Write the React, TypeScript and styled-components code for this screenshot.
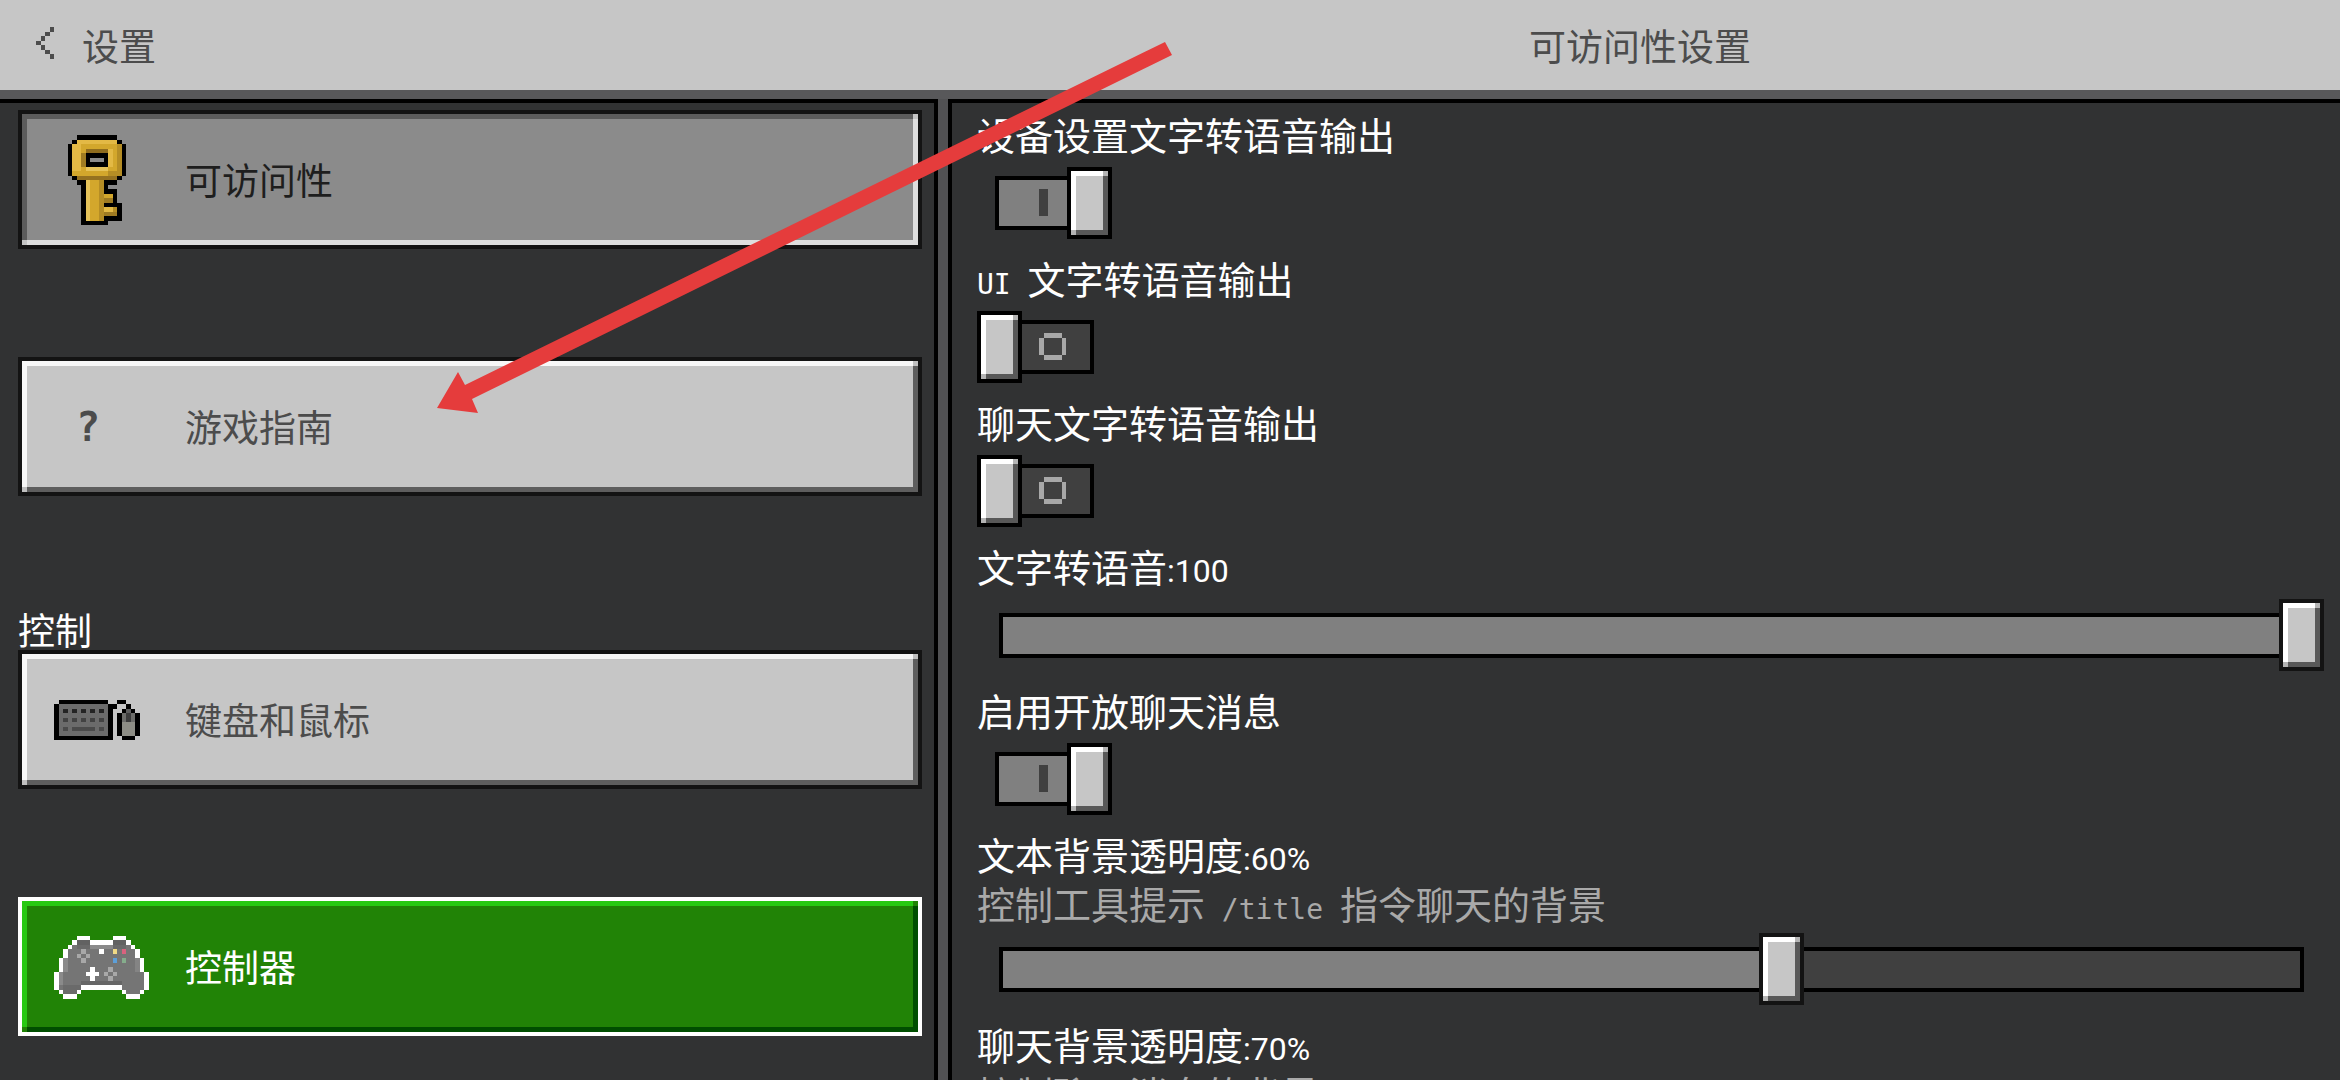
import React, { useState } from "react";
import styled, { createGlobalStyle, css } from "styled-components";

const cjk = `"Noto Sans CJK SC", "Noto Sans", sans-serif`;

const Global = createGlobalStyle`
  * { box-sizing: border-box; }
  body { margin: 0; background: #313233; }
  button, input { font: inherit; margin: 0; }
`;

/* Raised pixel edge: light top/left, dark bottom/right, blended corners. */
const bevel = (fill: string, light: string, dark: string, corner: string) => css`
  background:
    linear-gradient(${corner}, ${corner}) left bottom / 5px 5px no-repeat padding-box,
    linear-gradient(${corner}, ${corner}) right top / 5px 5px no-repeat padding-box,
    linear-gradient(${light}, ${light}) left top / 100% 5px no-repeat padding-box,
    linear-gradient(${light}, ${light}) left top / 5px 100% no-repeat padding-box,
    linear-gradient(${dark}, ${dark}) left bottom / 100% 5px no-repeat padding-box,
    linear-gradient(${dark}, ${dark}) right top / 5px 100% no-repeat padding-box,
    ${fill};
`;

const columns = css`
  display: grid;
  grid-template-columns: minmax(0, 938fr) minmax(0, 1392fr);
  column-gap: 10px;
`;

const Screen = styled.div`
  position: relative;
  display: flex;
  flex-direction: column;
  height: 100vh;
  overflow: hidden;
  background: #515153;
  color: #fff;
  font-family: ${cjk};
  font-size: 37px;
  line-height: 45px;
`;

const Header = styled.header`
  ${columns}
  align-items: center;
  flex: none;
  height: 99px;
  background: #c6c6c6;
  border-bottom: 9px solid #58585a;
  color: #4c4c4c;
`;

const BackButton = styled.button`
  display: flex;
  align-items: center;
  gap: 28px;
  justify-self: start;
  padding: 0 36px;
  border: 0;
  background: none;
  color: inherit;
  cursor: pointer;
`;

const Title = styled.h1`
  margin: 0;
  padding-right: 8px;
  text-align: center;
  font-size: inherit;
  font-weight: 400;
`;

const Panels = styled.div`
  ${columns}
  flex: 1;
  min-height: 0;
`;

const Sidebar = styled.nav`
  display: flex;
  flex-direction: column;
  gap: 108px;
  padding: 7px 12px 44px 18px;
  overflow-y: auto;
  scrollbar-width: none;
  background: #313233;
  border: solid #000;
  border-width: 4px 4px 0 0;
`;

const Section = styled.section`
  display: flex;
  flex-direction: column;
`;

const SectionTitle = styled.h2`
  margin: 0;
  padding-top: 4px;
  line-height: 42px;
  font-size: inherit;
  font-weight: 400;
`;

const SectionItems = styled.div`
  display: flex;
  flex-direction: column;
  gap: 108px;
`;

type Tone = "plain" | "pressed" | "focus";

const tones = {
  plain: css`
    ${bevel("#c6c6c6", "#f7f7f7", "#5e5e5e", "#c0c0c0")}
    border-color: #131313;
    color: #4c4c4c;
  `,
  pressed: css`
    ${bevel("#8b8b8b", "#5c5c5c", "#dedede", "#c4c4c4")}
    border-color: #131313;
    color: #1e1e1e;
  `,
  focus: css`
    ${bevel("#218306", "#27c912", "#004e00", "#218306")}
    border-color: #fff;
    color: #fff;
  `,
};

const NavButton = styled.button<{ $tone: Tone }>`
  display: flex;
  align-items: center;
  flex: none;
  gap: 32px;
  width: 100%;
  height: 139px;
  padding: 0 32px;
  border: 4px solid;
  text-align: left;
  cursor: pointer;
  ${(p) => tones[p.$tone]}
`;

const IconBox = styled.svg`
  flex: none;
  width: 99px;
  height: 90px;
`;

const GlyphIcon = styled.span`
  flex: none;
  width: 99px;
  padding: 2px 0 0 22px;
  font-family: "DejaVu Sans Mono", monospace;
  font-size: 40px;
  font-weight: 700;
`;

const Content = styled.main`
  padding: 6px 16px 0 25px;
  overflow-y: auto;
  scrollbar-width: none;
  background: #313233;
  border: solid #000;
  border-width: 4px 0 0 4px;
  font-size: 38px;
`;

const Row = styled.div`
  padding-bottom: 14px;
`;

const Label = styled.label`
  display: block;
  width: fit-content;
  line-height: 49px;
`;

const Hint = styled.p`
  margin: 0;
  padding-top: 4px;
  line-height: 41px;
  color: #a9a9a9;
`;

const Digits = styled.span`
  font-family: Roboto, sans-serif;
  font-size: 32px;
  line-height: 1;
`;

const Latin = styled.span`
  font-family: "DejaVu Sans Mono", monospace;
  font-size: 28px;
  line-height: 1;
  white-space: pre;
`;

const Switch = styled.div`
  display: grid;
  grid-template-areas: "stack";
  align-items: center;
  width: 135px;
  height: 72px;
  margin-top: 9px;
  > * { grid-area: stack; }
`;

const SwitchTrack = styled.svg<{ $on: boolean }>`
  width: 99px;
  height: 54px;
  margin-left: 18px;
  border: 4px solid #000;
  background: ${(p) => (p.$on ? "#808080" : "#404040")};
  fill: ${(p) => (p.$on ? "#404040" : "#a8a8a8")};
`;

const Knob = styled.span<{ $on: boolean }>`
  width: 45px;
  height: 72px;
  justify-self: ${(p) => (p.$on ? "end" : "start")};
  border: 4px solid #000;
  ${bevel("#c6c6c6", "#fff", "#585858", "#b4b4b4")}
`;

const SwitchInput = styled.input`
  width: 100%;
  height: 100%;
  opacity: 0;
  cursor: pointer;
`;

const Slider = styled.div`
  display: grid;
  grid-template-areas: "stack";
  align-items: center;
  height: 72px;
  margin-top: 9px;
  > * { grid-area: stack; }
`;

const Bar = styled.div`
  height: 45px;
  margin: 0 20px 0 22px;
  border: 4px solid #000;
  background: #404040;
`;

const Fill = styled.div`
  height: 100%;
  background: #808080;
`;

const Range = styled.input`
  appearance: none;
  min-width: 0;
  height: 72px;
  margin-left: 2px;
  background: none;
  outline: none;
  cursor: pointer;
  &::-webkit-slider-thumb {
    appearance: none;
    width: 45px;
    height: 72px;
    border: 4px solid #131313;
    ${bevel("#c6c6c6", "#fff", "#585858", "#b4b4b4")}
  }
`;

const Pointer = styled.svg`
  position: absolute;
  left: 0;
  top: 0;
  width: 1200px;
  height: 440px;
  pointer-events: none;
`;

/* [colour, x, y, width, height] in sprite pixels */
type Px = [string, number, number, number, number];

const Sprite = ({ top = 0, px }: { top?: number; px: Px[] }) => (
  <IconBox viewBox={`0 ${-top} 22 20`} shapeRendering="crispEdges" aria-hidden="true">
    {px.map(([c, x, y, w, h], i) => (
      <rect key={i} fill={c} x={x} y={y} width={w} height={h} />
    ))}
  </IconBox>
);

const K = "#000";
const keyPx: Px[] = [
  [K, 5, 0, 9, 11], [K, 4, 1, 11, 9], [K, 3, 2, 13, 7],
  [K, 6, 10, 6, 10], [K, 11, 12, 3, 4], [K, 11, 15, 4, 4],
  ["#8b8b8b", 12, 11, 2, 1],
  ["#d3a72c", 5, 1, 9, 9], ["#d3a72c", 4, 2, 11, 7],
  ["#e3b945", 5, 1, 9, 1], ["#e3b945", 4, 2, 2, 6],
  ["#b58d25", 14, 2, 1, 7], ["#b58d25", 12, 8, 2, 1], ["#957120", 5, 9, 9, 1],
  ["#8f6c1e", 7, 3, 5, 1], ["#9f7b22", 6, 4, 1, 3],
  ["#e6c35a", 7, 7, 5, 1], ["#e3b945", 12, 3, 1, 4],
  [K, 7, 4, 5, 3], ["#8b8b8b", 8, 5, 3, 1],
  ["#d3a72c", 7, 10, 3, 9], ["#e6c35a", 7, 10, 1, 9], ["#b58d25", 10, 10, 1, 9],
  ["#d3a72c", 11, 13, 2, 1], ["#9f7b22", 11, 14, 2, 1],
  ["#e3b945", 11, 16, 2, 1], ["#b58d25", 13, 16, 1, 2], ["#9f7b22", 11, 17, 3, 1],
];

const keyboardPx: Px[] = [
  [K, 1, 0, 11, 1], [K, 0, 1, 13, 8], ["#6b6b6b", 1, 1, 11, 7],
  ...[2, 4, 6, 8, 10].flatMap((x): Px[] => [["#242424", x, 2, 1, 1], ["#424242", x, 4, 1, 1]]),
  ["#4a4a4a", 2, 6, 1, 1], ["#4a4a4a", 4, 6, 5, 1], ["#4a4a4a", 10, 6, 1, 1],
  [K, 14, 0, 2, 1], [K, 13, 1, 1, 1], [K, 16, 1, 1, 1],
  [K, 15, 2, 3, 7], [K, 14, 3, 5, 5],
  ["#5c5c5c", 16, 2, 1, 1], ["#6d6d6a", 15, 3, 3, 2], ["#8e8e86", 15, 5, 3, 3], ["#3c3c3c", 16, 3, 1, 2],
];

const W = "#fff";
const G = "#757575";
const gamepadPx: Px[] = [
  [W, 5, 0, 3, 1], [W, 13, 0, 3, 1], [W, 4, 1, 13, 1], [W, 3, 2, 15, 1], [W, 2, 3, 17, 2],
  [W, 1, 5, 19, 3], [W, 0, 8, 21, 4], [W, 1, 12, 5, 1], [W, 15, 12, 5, 1], [W, 2, 13, 3, 1], [W, 16, 13, 3, 1],
  [G, 4, 2, 13, 1], [G, 3, 3, 15, 2], [G, 2, 5, 17, 3], [G, 1, 8, 19, 3],
  [G, 1, 11, 5, 1], [G, 15, 11, 5, 1], [G, 2, 12, 3, 1], [G, 16, 12, 3, 1],
  ["#626262", 5, 1, 3, 1], ["#626262", 13, 1, 3, 1], ["#6a6a6a", 5, 2, 3, 1], ["#6a6a6a", 13, 2, 3, 1],
  ["#8a8a8a", 8, 2, 5, 1], ["#8a8a8a", 2, 5, 1, 3], ["#8a8a8a", 1, 8, 1, 3], ["#848484", 18, 5, 1, 3],
  ["#666", 6, 10, 9, 1], ["#6a6a6a", 2, 11, 4, 2], [W, 5, 12, 1, 1],
  ["#a8a8a8", 6, 3, 1, 1], ["#a8a8a8", 5, 4, 1, 1], ["#a8a8a8", 7, 4, 1, 1], ["#a8a8a8", 6, 5, 1, 1],
  ["#a8a8a8", 12, 7, 1, 1], ["#a8a8a8", 11, 8, 1, 1], ["#a8a8a8", 13, 8, 1, 1], ["#a8a8a8", 12, 9, 1, 1],
  [W, 10, 3, 1, 1], [W, 8, 7, 1, 3], [W, 7, 8, 3, 1],
  ["#f0d985", 13, 3, 1, 1], ["#d9627e", 15, 3, 1, 1], ["#5d9fd8", 13, 5, 1, 1], ["#85ad8c", 15, 5, 1, 1],
];

const Toggle = ({ id, initial }: { id: string; initial: boolean }) => {
  const [on, setOn] = useState(initial);
  return (
    <Switch>
      <SwitchTrack $on={on} viewBox="0 0 91 46" shapeRendering="crispEdges" aria-hidden="true">
        {on ? (
          <rect x="40" y="9" width="9" height="27" />
        ) : (
          <path d="M45 9h18v5h-18zM45 31h18v5h-18zM40 14h5v17h-5zM63 14h4v17h-4z" />
        )}
      </SwitchTrack>
      <Knob $on={on} />
      <SwitchInput id={id} type="checkbox" role="switch" checked={on} onChange={(e) => setOn(e.target.checked)} />
    </Switch>
  );
};

const ToggleRow = ({ id, initial, children }: { id: string; initial: boolean; children: React.ReactNode }) => (
  <Row>
    <Label htmlFor={id}>{children}</Label>
    <Toggle id={id} initial={initial} />
  </Row>
);

const SliderRow = (p: { id: string; text: string; initial: number; unit?: string; hint?: React.ReactNode }) => {
  const [value, setValue] = useState(p.initial);
  return (
    <Row>
      <Label htmlFor={p.id}>
        {p.text}
        <Digits>:{value}{p.unit}</Digits>
      </Label>
      {p.hint && <Hint>{p.hint}</Hint>}
      <Slider>
        <Bar>
          <Fill style={{ width: `${value}%` }} />
        </Bar>
        <Range id={p.id} type="range" min={0} max={100} value={value} onChange={(e) => setValue(Number(e.target.value))} />
      </Slider>
    </Row>
  );
};

export default function App() {
  return (
    <Screen>
      <Global />
      <Header>
        <BackButton type="button">
          <svg width="18" height="36" viewBox="0 0 4 8" fill="currentColor" shapeRendering="crispEdges" aria-hidden="true">
            <path d="M3 0h1v1h-1zM2 1h1v1h-1zM1 2h1v1h-1zM0 3h1v1h-1zM1 4h1v1h-1zM2 5h1v1h-1zM3 6h1v1h-1z" />
          </svg>
          设置
        </BackButton>
        <Title>可访问性设置</Title>
      </Header>
      <Panels>
        <Sidebar>
          <NavButton type="button" $tone="pressed"><Sprite px={keyPx} />可访问性</NavButton>
          <NavButton type="button" $tone="plain"><GlyphIcon>?</GlyphIcon>游戏指南</NavButton>
          <Section>
            <SectionTitle>控制</SectionTitle>
            <SectionItems>
              <NavButton type="button" $tone="plain"><Sprite top={5.5} px={keyboardPx} />键盘和鼠标</NavButton>
              <NavButton type="button" $tone="focus"><Sprite top={3} px={gamepadPx} />控制器</NavButton>
            </SectionItems>
          </Section>
        </Sidebar>
        <Content>
          <ToggleRow id="device-tts" initial>设备设置文字转语音输出</ToggleRow>
          <ToggleRow id="ui-tts" initial={false}><Latin>UI </Latin>文字转语音输出</ToggleRow>
          <ToggleRow id="chat-tts" initial={false}>聊天文字转语音输出</ToggleRow>
          <SliderRow id="tts-volume" text="文字转语音" initial={100} />
          <ToggleRow id="open-chat" initial>启用开放聊天消息</ToggleRow>
          <SliderRow
            id="text-opacity"
            text="文本背景透明度"
            initial={60}
            unit="%"
            hint={<>控制工具提示<Latin> /title </Latin>指令聊天的背景</>}
          />
          <SliderRow id="chat-opacity" text="聊天背景透明度" initial={70} unit="%" hint="控制聊天消息的背景" />
        </Content>
      </Panels>
      <Pointer viewBox="0 0 1200 440" aria-hidden="true">
        <path fill="#e53c3c" d="M437 408L458 372L465 385L1165 42L1172 55L472 399L478 413Z" />
      </Pointer>
    </Screen>
  );
}
